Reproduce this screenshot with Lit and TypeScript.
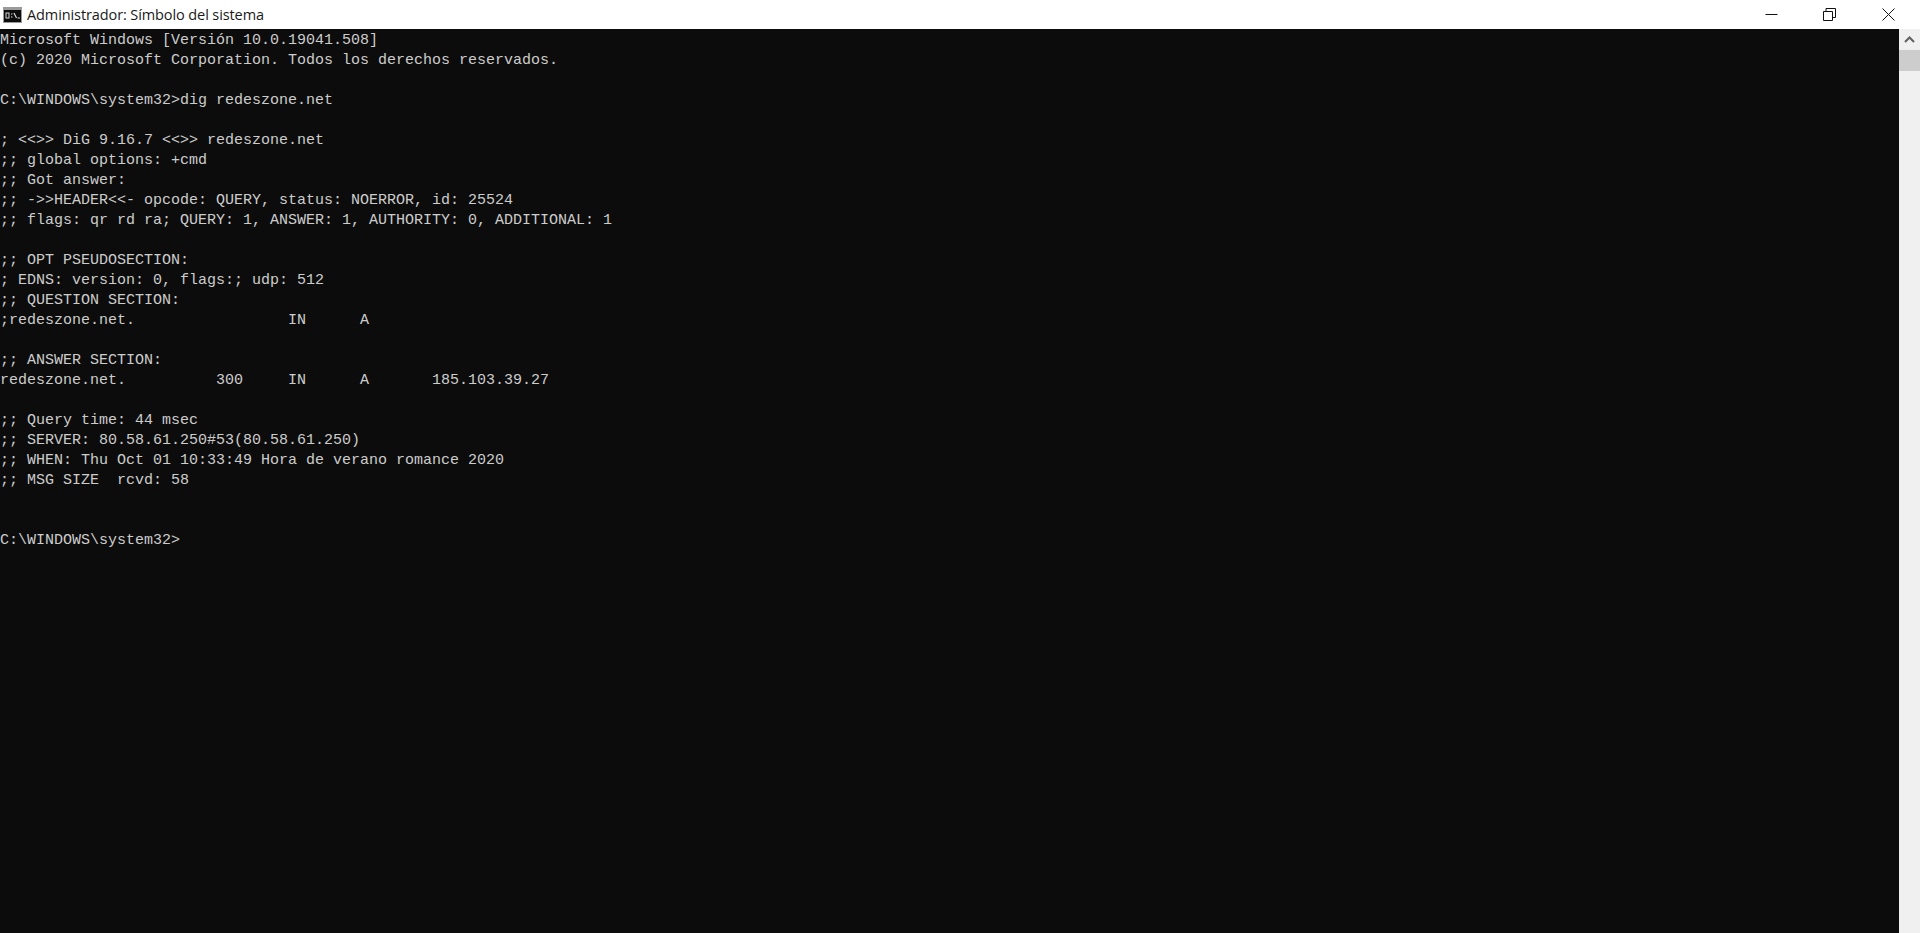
import { LitElement, html, css, svg } from "lit";
import { customElement } from "lit/decorators.js";

const OUTPUT = `Microsoft Windows [Versión 10.0.19041.508]
(c) 2020 Microsoft Corporation. Todos los derechos reservados.

C:\\WINDOWS\\system32>dig redeszone.net

; <<>> DiG 9.16.7 <<>> redeszone.net
;; global options: +cmd
;; Got answer:
;; ->>HEADER<<- opcode: QUERY, status: NOERROR, id: 25524
;; flags: qr rd ra; QUERY: 1, ANSWER: 1, AUTHORITY: 0, ADDITIONAL: 1

;; OPT PSEUDOSECTION:
; EDNS: version: 0, flags:; udp: 512
;; QUESTION SECTION:
;redeszone.net.\t\t\tIN\tA

;; ANSWER SECTION:
redeszone.net.\t\t300\tIN\tA\t185.103.39.27

;; Query time: 44 msec
;; SERVER: 80.58.61.250#53(80.58.61.250)
;; WHEN: Thu Oct 01 10:33:49 Hora de verano romance 2020
;; MSG SIZE  rcvd: 58


C:\\WINDOWS\\system32>`;

@customElement("app-root")
export class AppRoot extends LitElement {
  static styles = css`
    :host { display: block; height: 933px; overflow: hidden; background: #0c0c0c; }
    .window { display: flex; flex-direction: column; height: 933px; }
    .titlebar { display: flex; align-items: center; height: 29px; flex: none; background: #fff; padding-left: 3px; }
    .app-icon { width: 19px; height: 16px; flex: none; margin-top: 1px; }
    .title { margin-left: 5px; font: 14.5px/29px "Open Sans", "Noto Sans", sans-serif; color: #1a1a1a; white-space: nowrap; flex: 1; letter-spacing: -0.1px; }
    .controls { display: flex; flex: none; padding-right: 2.5px; }
    .ctl { width: 58.5px; height: 29px; display: flex; align-items: center; justify-content: center; }
    .ctl svg { width: 13px; height: 13px; display: block; margin-bottom: 1px; }
    .body { flex: 1; display: flex; min-height: 0; }
    .console { flex: 1; min-width: 0; background: #0c0c0c; }
    pre { margin: 0; padding-top: 2px; font-family: "Liberation Mono", monospace; font-size: 15px; line-height: 20px; color: #cccccc; tab-size: 8; }
    .scrollbar { width: 21px; flex: none; background: #f0f0f0; display: flex; flex-direction: column; }
    .arrow { height: 21px; display: flex; align-items: center; justify-content: center; }
    .arrow svg { width: 11px; height: 7px; display: block; }
    .thumb { height: 21px; background: #cdcdcd; }
  `;

  render() {
    return html`
      <div class="window">
        <div class="titlebar">
          <svg class="app-icon" viewBox="0 0 19 16">
            <rect x="0" y="0" width="19" height="16" fill="#9a9a9a"></rect>
            <rect x="1" y="3" width="17" height="12" fill="#0c0c0c"></rect>
            <rect x="3" y="6" width="3" height="5" fill="none" stroke="#d8d8d8" stroke-width="1"></rect>
            <path d="M8 7h1.5M8 10h1.5M11 6l2.5 5M14.5 11h2.5" fill="none" stroke="#d8d8d8" stroke-width="1.2"></path>
          </svg>
          <div class="title">Administrador: Símbolo del sistema</div>
          <div class="controls">
            <div class="ctl">${svg`<svg viewBox="0 0 13 13"><path d="M0.5 6.5h12" stroke="#111" fill="none"></path></svg>`}</div>
            <div class="ctl">${svg`<svg viewBox="0 0 13 13"><path d="M0.5 3.5h9v9h-9z M3 3.5V0.5h9.5v9h-3" stroke="#111" fill="none"></path></svg>`}</div>
            <div class="ctl">${svg`<svg viewBox="0 0 13 13"><path d="M0.5 0.5l12 12M12.5 0.5l-12 12" stroke="#111" fill="none"></path></svg>`}</div>
          </div>
        </div>
        <div class="body">
          <div class="console"><pre>${OUTPUT}</pre></div>
          <div class="scrollbar">
            <div class="arrow">${svg`<svg viewBox="0 0 11 7"><path d="M1 6l4.5-4.5L10 6" stroke="#606060" stroke-width="2" fill="none"></path></svg>`}</div>
            <div class="thumb"></div>
          </div>
        </div>
      </div>
    `;
  }
}
